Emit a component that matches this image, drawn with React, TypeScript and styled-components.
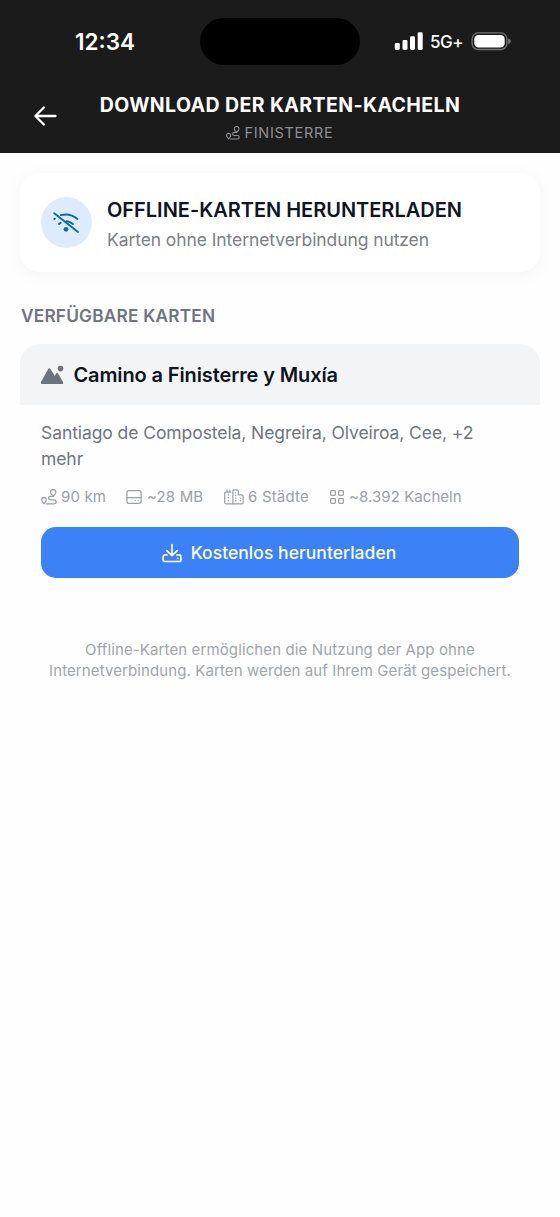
import React from "react";
import styled, { createGlobalStyle } from "styled-components";

const GlobalStyle = createGlobalStyle`
  * { box-sizing: border-box; }
  body { margin: 0; background: #fefefe; }
  svg { display: block; flex: none; }
`;

const Screen = styled.div`
  min-height: 1217px;
  background: #fefefe;
  font-family: Inter, "Liberation Sans", sans-serif;
`;

const Header = styled.header`
  height: 153px;
  background: #1b1b1b;
  color: #fff;
`;

const StatusBar = styled.div`
  height: 83px;
  display: grid;
  grid-template-columns: 200px 160px 200px;
`;

const Clock = styled.div`
  padding: 28px 0 0 75px;
  font-size: 22.5px;
  line-height: 28px;
  font-weight: 600;
  letter-spacing: 0;
`;

const Island = styled.div`
  height: 47px;
  margin-top: 18px;
  border-radius: 24px;
  background: #000;
`;

const StatusIcons = styled.div`
  display: flex;
  align-items: flex-start;
  padding: 32px 0 0 34px;
`;

const Network = styled.span`
  width: 48px;
  padding: 0 0 0 7px;
  font-size: 17px;
  line-height: 21px;
  font-weight: 500;
  letter-spacing: -0.5px;
  white-space: nowrap;
`;

const TitleBar = styled.div`
  height: 70px;
  display: grid;
  grid-template-columns: 80px 400px 80px;
`;

const BackButton = styled.button`
  border: 0;
  padding: 22px 0 0 33px;
  background: none;
  color: #fff;
  display: flex;
  align-items: flex-start;
`;

const Titles = styled.div`
  display: flex;
  flex-direction: column;
  align-items: center;
`;

const Title = styled.h1`
  margin: 8px 0 0;
  font-size: 19.5px;
  line-height: 28px;
  font-weight: 700;
  letter-spacing: 0.4px;
  white-space: nowrap;
`;

const Subtitle = styled.div`
  display: flex;
  align-items: center;
  gap: 4px;
  margin-top: 4px;
  color: #8e8e93;
  font-size: 14.5px;
  line-height: 20px;
  letter-spacing: 0.7px;
`;

const Content = styled.main`
  padding: 20px 20px 0;
`;

const IntroCard = styled.section`
  height: 99px;
  display: flex;
  align-items: center;
  gap: 15px;
  padding: 0 21px;
  border-radius: 20px;
  background: #fff;
  box-shadow: 0 3px 18px rgba(0, 0, 0, 0.045);
`;

const IconCircle = styled.div`
  width: 51px;
  height: 51px;
  padding-right: 1px;
  border-radius: 50%;
  background: #deebfe;
  color: #0b6ba8;
  display: flex;
  align-items: center;
  justify-content: center;
`;

const IntroTitle = styled.h2`
  margin: 2px 0 3px;
  color: #10151f;
  font-size: 20px;
  line-height: 28px;
  font-weight: 600;
  letter-spacing: -0.02px;
  white-space: nowrap;
`;

const IntroText = styled.p`
  margin: 0;
  color: #7c7f83;
  font-size: 17.5px;
  line-height: 25px;
  letter-spacing: -0.09px;
  white-space: nowrap;
`;

const SectionLabel = styled.h3`
  margin: 32px 0 0 1px;
  height: 40px;
  color: #70757d;
  font-size: 17.25px;
  line-height: 24px;
  font-weight: 600;
  letter-spacing: 0.2px;
`;

const MapCard = styled.section`
  border-radius: 20px;
  overflow: hidden;
`;

const MapHeader = styled.div`
  height: 61px;
  display: flex;
  align-items: center;
  gap: 9.500px;
  padding-left: 20px;
  background: #f2f4f6;
  color: #6c737c;
`;

const MapTitle = styled.h4`
  margin: 0;
  color: #10151c;
  font-size: 20px;
  line-height: 28px;
  font-weight: 600;
  letter-spacing: -0.12px;
  white-space: nowrap;
`;

const MapBody = styled.div`
  padding: 15px 21px 21px;
`;

const Places = styled.p`
  margin: 0;
  color: #70757c;
  font-size: 17.5px;
  line-height: 25.5px;
  letter-spacing: -0.08px;
`;

const Stats = styled.div`
  display: flex;
  height: 20px;
  margin: 16px 0 20px;
  color: #9ba0a6;
`;

const Stat = styled.div<{ $w: number; $gap: number; $ls: number }>`
  width: ${(p) => p.$w}px;
  display: flex;
  align-items: center;
  gap: ${(p) => p.$gap}px;
  font-size: 15px;
  line-height: 20px;
  letter-spacing: ${(p) => p.$ls}px;
  white-space: nowrap;
`;

const DownloadButton = styled.button`
  width: 478px;
  height: 51px;
  border: 0;
  border-radius: 15px;
  padding: 0 2px 0 0;
  background: #3c82f6;
  color: #fff;
  display: flex;
  align-items: center;
  justify-content: center;
  gap: 9px;
  font-family: inherit;
  font-size: 17.5px;
  line-height: 24px;
  font-weight: 500;
  letter-spacing: 0.04px;
  white-space: nowrap;
`;

const Note = styled.p`
  margin: 41px 0 0;
  color: #a0a5aa;
  font-size: 15px;
  line-height: 20.5px;
  text-align: center;
`;

const NoteLine = styled.span<{ $ls: number }>`
  display: block;
  letter-spacing: ${(p) => p.$ls}px;
  white-space: nowrap;
`;

const RouteIcon = ({ size = 16 }: { size?: number }) => (
  <svg width={size} height={size} viewBox="0 0 16 16" fill="none" stroke="currentColor" strokeWidth="1.3" strokeLinecap="round" strokeLinejoin="round">
    <path d="M3 14.700C1.500 13.300.7 12.100.7 10.800a2.300 2.300 0 0 1 4.600 0c0 1.300-.8 2.500-2.300 3.900z" />
    <path d="M12.200 7.300C10.600 5.900 9.500 4.600 9.500 3.300a2.700 2.700 0 0 1 5.400 0c0 1.300-1.100 2.600-2.700 4z" />
    <path d="M12.200 7.300H9.300a1.750 1.750 0 0 0 0 3.500h3.800a2 2 0 0 1 0 4H5.200" />
  </svg>
);

const DriveIcon = () => (
  <svg width="16" height="16" viewBox="0 0 16 16" fill="none" stroke="currentColor" strokeWidth="1.3">
    <rect x=".9" y="1.600" width="14.200" height="12.800" rx="1.800" />
    <path d="M.9 8.700h14.200" />
    <path d="M9.100 11.600h.1M12.100 11.600h.1" strokeWidth="1.300" strokeLinecap="round" />
  </svg>
);

const CityIcon = () => (
  <svg width="20" height="16" viewBox="0 0 20 16" fill="none" stroke="currentColor" strokeWidth="1.200" strokeLinecap="round" strokeLinejoin="round">
    <path d="M8.600 14.900H2.200A1.500 1.500 0 0 1 .7 13.400V4.300a1.200 1.200 0 0 1 1.200-1.200h4.800M3 3V1.100M5.800 3V1.100" />
    <path d="M8.900 14.900V2.200A1.300 1.300 0 0 1 10.200.9h2.900a1.300 1.300 0 0 1 1.300 1.300v3.700h3.100a1.600 1.600 0 0 1 1.600 1.600v5.900a1.500 1.500 0 0 1-1.500 1.500H8.900z" />
    <path d="M4.200 6h.2M4.200 8.800h.2M4.200 11.600h.2M11.600 3.900h.2M11.600 6.500h.2M11.600 9.100h.2M11.600 11.700h.2M16.300 9.100h.2M16.300 11.700h.2" strokeWidth="1.400" />
  </svg>
);

const GridIcon = () => (
  <svg width="14" height="14" viewBox="0 0 14 14" fill="none" stroke="currentColor" strokeWidth="1.300">
    <rect x=".7" y=".7" width="4.600" height="4.600" rx=".8" />
    <rect x="8.700" y=".7" width="4.600" height="4.600" rx=".8" />
    <rect x=".7" y="8.700" width="4.600" height="4.600" rx=".8" />
    <rect x="8.700" y="8.700" width="4.600" height="4.600" rx=".8" />
  </svg>
);

const WifiOffIcon = () => (
  <svg width="26" height="22" viewBox="0 0 26 22" fill="none" stroke="currentColor" strokeWidth="1.900" strokeLinecap="round">
    <path d="M1.200 1.200 25 20" />
    <path d="M7.800 3.100C14 1.600 20 3.100 24.500 7" />
    <path d="M1.400 7.100l.5-.4M6 11.900l1.700-1.200M13.600 9.300c2.400.2 4.500 1.100 6.300 2.700" />
    <circle cx="13" cy="17.300" r="2.400" fill="currentColor" stroke="none" />
  </svg>
);

const MountainIcon = () => (
  <svg width="24" height="20" viewBox="0 0 24 20" fill="currentColor">
    <path d="M8.200 4.100q1.100-1.600 2.200 0l4.300 6.800 1.500-2.400q.9-1.300 1.800 0l5 8.400q.9 2.100-1.300 2.100H2.300q-2.200 0-1.200-2.200z" />
    <circle cx="20.500" cy="3.600" r="2.800" />
  </svg>
);

const DownloadIcon = () => (
  <svg width="20" height="20" viewBox="0 0 20 20" fill="none" stroke="currentColor" strokeWidth="1.700" strokeLinecap="round" strokeLinejoin="round">
    <path d="M10 1.500v10.900M4.800 7.600l5.200 5 5.200-5" />
    <path d="M5 11.900H3.100A2 2 0 0 0 1.100 13.900v2.800a1.800 1.800 0 0 0 1.800 1.800h14.200a1.800 1.800 0 0 0 1.800-1.800v-2.800a2 2 0 0 0-2-2H15" />
    <circle cx="15.600" cy="15.300" r=".5" fill="currentColor" strokeWidth=".6" />
  </svg>
);

const SignalIcon = () => (
  <svg width="29" height="19" viewBox="0 0 29 19" fill="currentColor">
    <rect x=".8" y="11" width="5" height="7" rx="1.400" />
    <rect x="8.500" y="8" width="5" height="10" rx="1.400" />
    <rect x="16" y="4.200" width="5" height="13.800" rx="1.400" />
    <rect x="23.700" y=".3" width="5" height="17.700" rx="1.400" />
  </svg>
);

const BatteryIcon = () => (
  <svg width="40" height="19" viewBox="0 0 40 19" fill="none">
    <rect x="1.100" y=".9" width="34.800" height="16.600" rx="6" stroke="#747474" strokeWidth="1.300" />
    <rect x="3.300" y="3" width="30.400" height="12.400" rx="4.200" fill="#fff" />
    <path d="M37.300 6.200c2 .8 2.500 1.900 2.500 3s-.5 2.200-2.500 3z" fill="#747474" />
  </svg>
);

const ArrowIcon = () => (
  <svg width="25" height="22" viewBox="0 0 25 22" fill="none" stroke="currentColor" strokeWidth="2.300" strokeLinecap="round" strokeLinejoin="round">
    <path d="M22.500 11H2.400M10.900 2.500 2.400 11l8.500 8.500" />
  </svg>
);

export default function App() {
  return (
    <Screen>
      <GlobalStyle />
      <Header>
        <StatusBar>
          <Clock>12:34</Clock>
          <Island />
          <StatusIcons>
            <SignalIcon />
            <Network>5G+</Network>
            <BatteryIcon />
          </StatusIcons>
        </StatusBar>
        <TitleBar>
          <BackButton aria-label="Zurück"><ArrowIcon /></BackButton>
          <Titles>
            <Title>DOWNLOAD DER KARTEN-KACHELN</Title>
            <Subtitle><RouteIcon size={14} />FINISTERRE</Subtitle>
          </Titles>
        </TitleBar>
      </Header>
      <Content>
        <IntroCard>
          <IconCircle><WifiOffIcon /></IconCircle>
          <div>
            <IntroTitle>OFFLINE-KARTEN HERUNTERLADEN</IntroTitle>
            <IntroText>Karten ohne Internetverbindung nutzen</IntroText>
          </div>
        </IntroCard>
        <SectionLabel>VERFÜGBARE KARTEN</SectionLabel>
        <MapCard>
          <MapHeader>
            <MountainIcon />
            <MapTitle>Camino a Finisterre y Muxía</MapTitle>
          </MapHeader>
          <MapBody>
            <Places>Santiago de Compostela, Negreira, Olveiroa, Cee, +2<br />mehr</Places>
            <Stats>
              <Stat $w={85} $gap={4} $ls={0.15}><RouteIcon />90 km</Stat>
              <Stat $w={98} $gap={5} $ls={0.15}><DriveIcon />~28 MB</Stat>
              <Stat $w={106} $gap={4} $ls={0.18}><CityIcon />6 Städte</Stat>
              <Stat $w={140} $gap={5} $ls={0.06}><GridIcon />~8.392 Kacheln</Stat>
            </Stats>
            <DownloadButton><DownloadIcon />Kostenlos herunterladen</DownloadButton>
          </MapBody>
        </MapCard>
        <Note>
          <NoteLine $ls={0.12}>Offline-Karten ermöglichen die Nutzung der App ohne</NoteLine>
          <NoteLine $ls={0.1}>Internetverbindung. Karten werden auf Ihrem Gerät gespeichert.</NoteLine>
        </Note>
      </Content>
    </Screen>
  );
}
